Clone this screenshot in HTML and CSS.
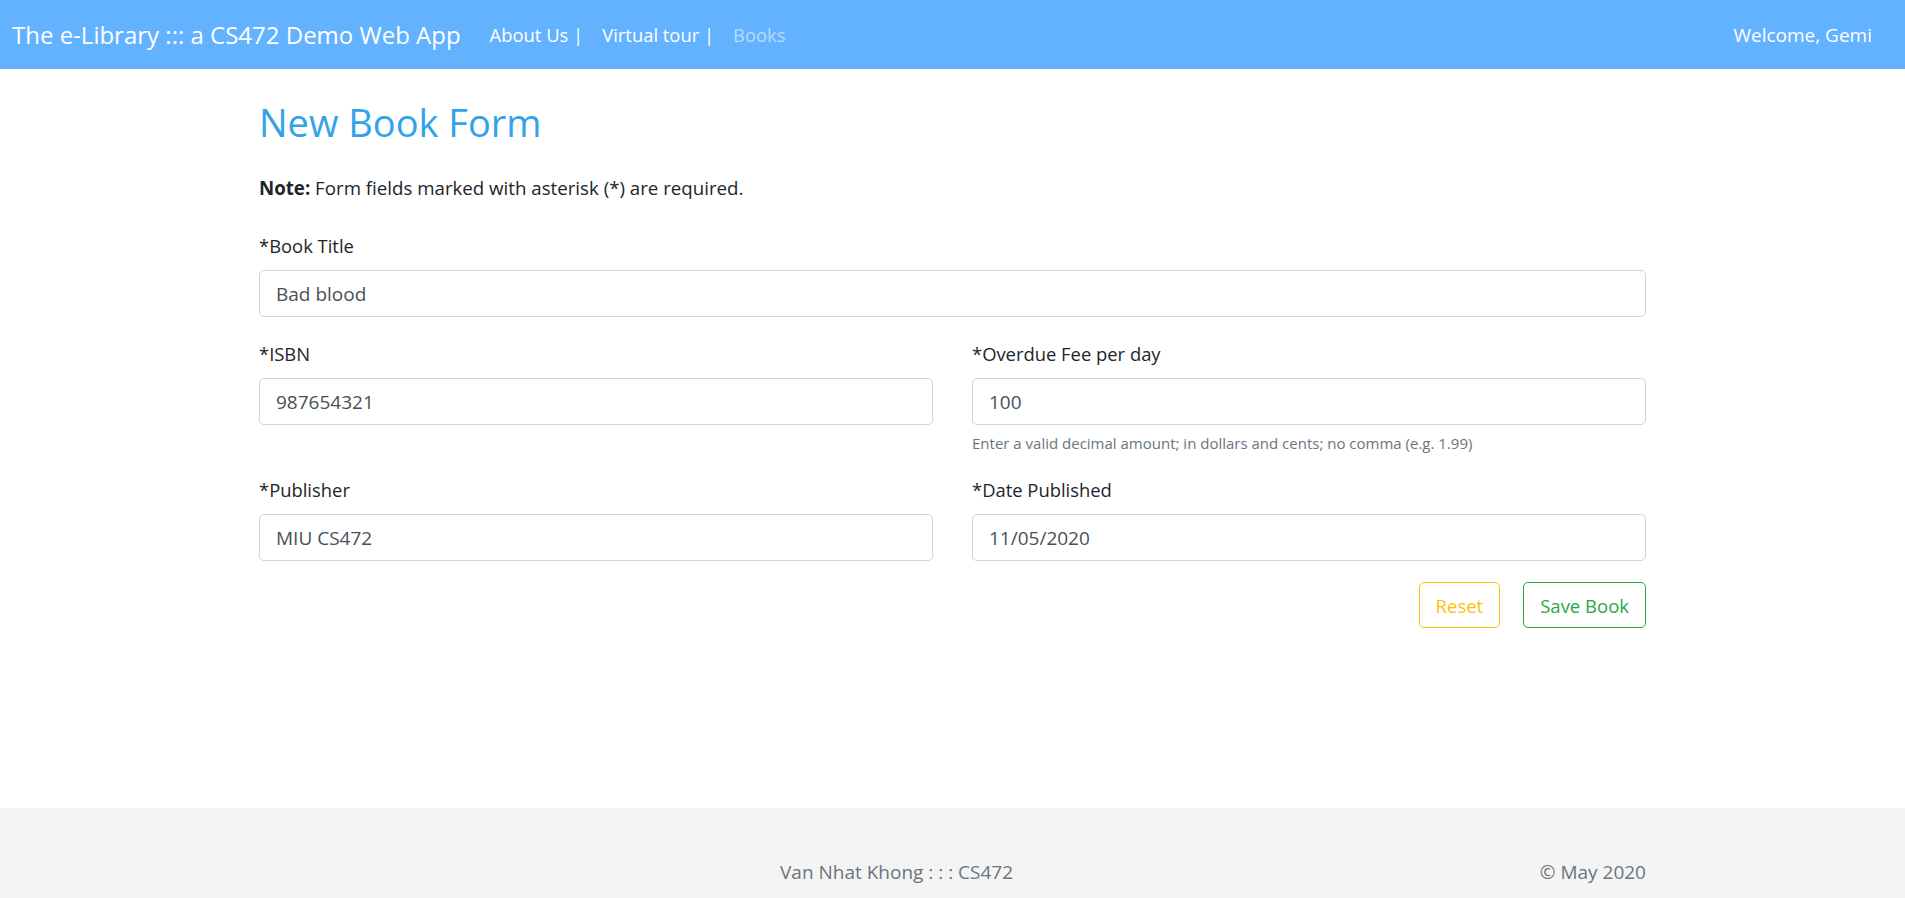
FILE: index.html
```html
<!DOCTYPE html>
<html lang="en">
<head>
<meta charset="utf-8">
<title>New Book Form</title>
<link rel="stylesheet" href="styles.css">
</head>
<body>
<nav class="navbar">
  <a class="brand" href="#">The e-Library ::: a CS472 Demo Web App</a>
  <ul class="nav-links">
    <li><a href="#">About Us |</a></li>
    <li><a href="#">Virtual tour |</a></li>
    <li><a class="muted" href="#">Books</a></li>
  </ul>
  <span class="welcome">Welcome, Gemi</span>
</nav>
<main class="container">
  <h1 class="title">New Book Form</h1>
  <p class="note"><strong>Note:</strong> Form fields marked with asterisk (*) are required.</p>
  <form class="form">
    <div class="group">
      <label class="label">*Book Title</label>
      <input class="control" type="text" value="Bad blood">
    </div>
    <div class="row">
      <div class="group">
        <label class="label">*ISBN</label>
        <input class="control" type="text" value="987654321">
      </div>
      <div class="group">
        <label class="label">*Overdue Fee per day</label>
        <input class="control" type="text" value="100">
        <small class="help">Enter a valid decimal amount; in dollars and cents; no comma (e.g. 1.99)</small>
      </div>
    </div>
    <div class="row">
      <div class="group">
        <label class="label">*Publisher</label>
        <input class="control" type="text" value="MIU CS472">
      </div>
      <div class="group">
        <label class="label">*Date Published</label>
        <input class="control" type="text" value="11/05/2020">
      </div>
    </div>
    <div class="actions">
      <button class="btn btn-reset" type="reset">Reset</button>
      <button class="btn btn-save" type="button">Save Book</button>
    </div>
  </form>
</main>
<footer class="footer">
  <div class="footer-inner">
    <span class="author">Van Nhat Khong : : : CS472</span>
    <span class="copy">© May 2020</span>
  </div>
</footer>
</body>
</html>
```
FILE: styles.css
```css
* { box-sizing: border-box; }
html, body { margin: 0; padding: 0; }
body {
  font-family: "Open Sans", "Noto Sans", sans-serif;
  font-size: 16px;
  color: #212529;
  background: #fff;
}
.navbar {
  height: 69px;
  background: #63b2ff;
  display: flex;
  align-items: center;
  padding: 0 33px 0 12px;
}
.brand {
  color: #fff;
  text-decoration: none;
  font-size: 24px;
  margin-right: 29px;
}
.nav-links {
  list-style: none;
  margin: 0;
  padding: 0;
  display: flex;
  gap: 19px;
  flex: 1;
}
.nav-links a {
  color: #fff;
  text-decoration: none;
  font-size: 18.4px;
}
.nav-links a.muted { color: rgba(255,255,255,0.55); }
.welcome { color: #fff; font-size: 19px; }
.container {
  width: 1387px;
  margin: 0 auto;
  padding-top: 29px;
  min-height: 739px;
}
.title {
  margin: 0;
  color: #33a3e9;
  font-weight: 400;
  font-size: 38px;
  line-height: 48px;
}
.note {
  margin: 30px 0 0;
  font-size: 18.7px;
  line-height: 24px;
}
.form { margin-top: 34px; }
.group { display: flex; flex-direction: column; }
.label {
  font-size: 18.4px;
  line-height: 24px;
  margin-bottom: 12px;
}
.control {
  height: 47px;
  border: 1px solid #ced4da;
  border-radius: 5px;
  padding: 0 16px;
  font-family: inherit;
  font-size: 19px;
  color: #495057;
  background: #fff;
}
.row {
  display: grid;
  grid-template-columns: 1fr 1fr;
  column-gap: 39px;
  margin-top: 25px;
}
.help {
  margin-top: 8px;
  font-size: 15px;
  color: #6c757d;
  line-height: 20px;
}
.actions {
  display: flex;
  justify-content: flex-end;
  gap: 23px;
  margin-top: 21px;
}
.btn {
  height: 46px;
  padding: 0 16px;
  background: #fff;
  border-radius: 5px;
  font-family: inherit;
  font-size: 18.5px;
  cursor: pointer;
}
.btn-reset { border: 1px solid #ffc107; color: #ffc107; }
.btn-save { border: 1px solid #28a745; color: #28a745; }
.footer {
  background: #f4f4f4;
  height: 90px;
}
.footer-inner {
  width: 1387px;
  margin: 0 auto;
  display: grid;
  grid-template-columns: 521px 1fr auto;
  padding-top: 51px;
  color: #6c757d;
  font-size: 19px;
}
.author { grid-column: 2; }
.copy { grid-column: 3; }
```
